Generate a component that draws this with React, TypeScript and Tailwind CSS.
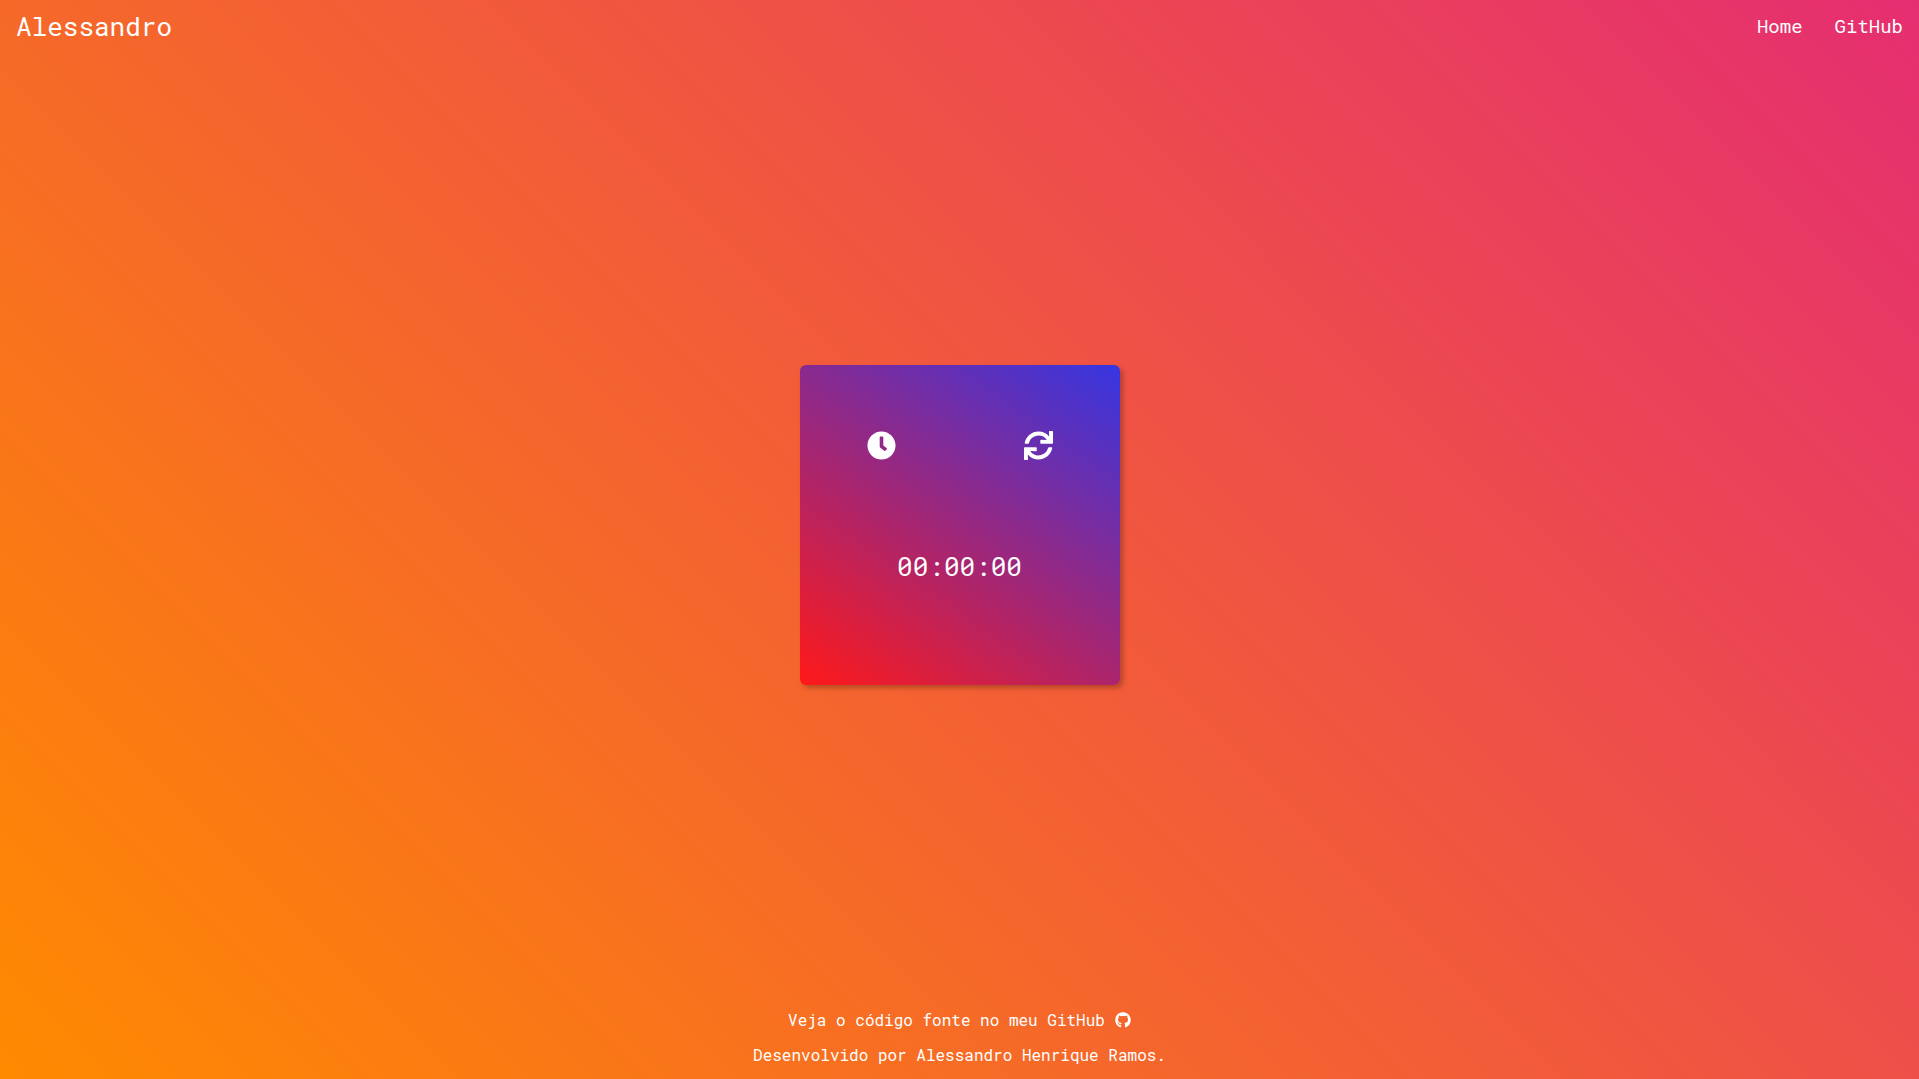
import { useEffect, useState } from "react";
import { FaClock, FaGithub, FaSync } from "react-icons/fa";

const pad = (value: number) => String(value).padStart(2, "0");

export default function App() {
  const [running, setRunning] = useState(false);
  const [seconds, setSeconds] = useState(0);

  useEffect(() => {
    if (!running) return;
    const id = setInterval(() => setSeconds((s) => s + 1), 1000);
    return () => clearInterval(id);
  }, [running]);

  const time = [Math.floor(seconds / 3600), Math.floor(seconds / 60) % 60, seconds % 60].map(pad).join(":");

  return (
    <div className="flex min-h-screen flex-col bg-[linear-gradient(45deg,#ff8a00,#e52e71)] font-['Roboto_Mono','DejaVu_Sans_Mono',monospace] text-white">
      <header className="flex items-center justify-between px-4 py-2.5">
        <h1 className="text-[26px] leading-8">Alessandro</h1>
        <nav className="flex gap-8 text-[19px] leading-8">
          <a href="#home">Home</a>
          <a href="#github">GitHub</a>
        </nav>
      </header>

      <main className="flex grow items-center justify-center">
        <section className="flex aspect-square w-80 flex-col rounded-md bg-[linear-gradient(35deg,#ff1919,#3636e2)] pt-[66px] shadow-[3px_3px_5px_rgba(0,0,0,0.25)]">
          <div className="flex justify-between px-[67px] text-[29px]">
            <button type="button" aria-label="Iniciar" onClick={() => setRunning((r) => !r)}>
              <FaClock />
            </button>
            <button
              type="button"
              aria-label="Reiniciar"
              onClick={() => {
                setRunning(false);
                setSeconds(0);
              }}
            >
              <FaSync />
            </button>
          </div>
          <p className="mt-[90px] text-center text-[26px] leading-8">{time}</p>
        </section>
      </main>

      <footer className="flex flex-col items-center gap-3.5 pt-3 pb-3.5 text-base leading-[21px]">
        <a href="#source" className="flex items-center gap-2.5">
          Veja o código fonte no meu GitHub
          <FaGithub />
        </a>
        <p>Desenvolvido por Alessandro Henrique Ramos.</p>
      </footer>
    </div>
  );
}
